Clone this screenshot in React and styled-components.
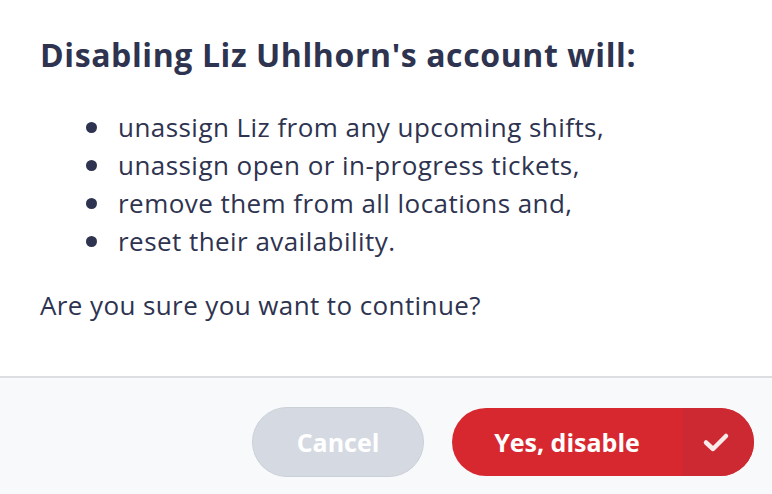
import styled, { createGlobalStyle } from "styled-components";

const GlobalStyle = createGlobalStyle`
    html, body {
        margin: 0;
        padding: 0;
        background: #ffffff;
    }
    body {
        font-family: "Open Sans", "Noto Sans", sans-serif;
        color: #2e3350;
    }
`;

const Modal = styled.div`
    width: 772px;
    height: 494px;
    display: flex;
    flex-direction: column;
    box-sizing: border-box;
    overflow: hidden;
`;
const Body = styled.div`
    height: 376px;
    padding: 34px 40px 0 40px;
    box-sizing: border-box;
`;
const Title = styled.h2`
    margin: 0;
    font-size: 32px;
    font-weight: 700;
    line-height: 42px;
    letter-spacing: 0.6px;
`;
const List = styled.ul`
    margin: 32px 0 0 0;
    padding: 0 0 0 46px;
    list-style: none;
`;
const Item = styled.li`
    position: relative;
    padding-left: 32px;
    font-size: 26px;
    line-height: 38px;
    letter-spacing: 0.45px;
    &::before {
        content: "";
        position: absolute;
        left: 0;
        top: 14px;
        width: 11px;
        height: 11px;
        border-radius: 50%;
        background: #2e3350;
    }
`;
const Question = styled.p`
    margin: 26px 0 0 0;
    font-size: 26px;
    line-height: 38px;
    letter-spacing: 0.4px;
`;
const Footer = styled.div`
    flex: 1;
    background: #f8f9fb;
    border-top: 2px solid #dcdee2;
    display: flex;
    align-items: center;
    justify-content: flex-end;
    gap: 28px;
    padding: 12px 18px 0 0;
`;
const CancelButton = styled.button`
    width: 172px;
    height: 70px;
    border-radius: 35px;
    border: 1px solid #cbd0d8;
    background: #d5dae2;
    color: #ffffff;
    font-family: inherit;
    font-size: 25px;
    font-weight: 700;
    cursor: pointer;
`;
const ConfirmButton = styled.button`
    width: 302px;
    height: 68px;
    border-radius: 34px;
    border: none;
    background: #d8282f;
    color: #ffffff;
    font-family: inherit;
    font-size: 25px;
    font-weight: 700;
    display: flex;
    padding: 0;
    overflow: hidden;
    cursor: pointer;
`;
const ConfirmLabel = styled.span`
    flex: 1;
    display: flex;
    align-items: center;
    justify-content: center;
`;
const ConfirmIcon = styled.span`
    width: 68px;
    background: #cc2932;
    display: flex;
    align-items: center;
    justify-content: center;
    padding-right: 4px;
`;

const items = [
    "unassign Liz from any upcoming shifts,",
    "unassign open or in-progress tickets,",
    "remove them from all locations and,",
    "reset their availability.",
];

export default function App() {
    return (
        <Modal>
            <GlobalStyle />
            <Body>
                <Title>Disabling Liz Uhlhorn's account will:</Title>
                <List>
                    {items.map((text) => (
                        <Item key={text}>{text}</Item>
                    ))}
                </List>
                <Question>Are you sure you want to continue?</Question>
            </Body>
            <Footer>
                <CancelButton>Cancel</CancelButton>
                <ConfirmButton>
                    <ConfirmLabel>Yes, disable</ConfirmLabel>
                    <ConfirmIcon>
                        <svg width="28" height="22" viewBox="0 0 28 22" fill="none">
                            <path d="M4 11.5 L11 18 L24 5" stroke="#fbeaea" strokeWidth="4.5" strokeLinecap="round" strokeLinejoin="round" />
                        </svg>
                    </ConfirmIcon>
                </ConfirmButton>
            </Footer>
        </Modal>
    );
}
